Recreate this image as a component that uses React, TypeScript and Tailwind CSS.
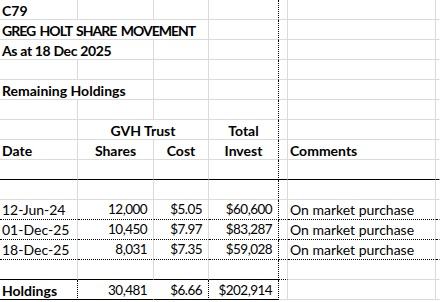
import clsx from "clsx";

type Line = "grid" | "dot" | "black" | "none";

interface CellProps {
  text?: string;
  span?: number;
  align?: "l" | "c" | "r";
  bold?: boolean;
  tight?: boolean;
  lift?: boolean;
  className?: string;
  bottom?: Line;
  right?: Line;
}

function Cell({ text, span = 1, align = "l", bold, tight, lift, className, bottom = "grid", right = "grid" }: CellProps) {
  return (
    <div
      className={clsx(
        "h-[20px] flex items-end whitespace-nowrap leading-[17px] overflow-visible",
        span === 2 && "col-span-2",
        span === 3 && "col-span-3",
        align === "l" && "justify-start pl-[2px]",
        align === "c" && "justify-center",
        align === "r" && "justify-end pr-[6px]",
        bold && "font-bold",
        // Lato digits run wider than the sheet's font
        tight && "text-[13.5px] tracking-[-0.55px]",
        lift && "pb-[1px]",
        bottom === "grid" && "border-b border-b-[#dadada]",
        bottom === "dot" && "border-b border-b-black [border-bottom-style:dotted]",
        bottom === "black" && "border-b border-b-black",
        right === "grid" && "border-r border-r-[#dadada]",
        right === "dot" && "border-r border-r-black [border-right-style:dotted]",
        right === "none" && "border-r border-r-white",
        className
      )}
    >
      {text}
    </div>
  );
}

// blank cells E, F, G at the right of each row
function Tail({ bottom = "grid", eBottom }: { bottom?: Line; eBottom?: Line }) {
  return (
    <>
      <Cell bottom={eBottom ?? bottom} />
      <Cell bottom={bottom} />
      <Cell bottom={bottom} right="none" />
    </>
  );
}

const purchases = [
  { date: "12-Jun-24", shares: "12,000", cost: "$5.05", invest: "$60,600" },
  { date: "01-Dec-25", shares: "10,450", cost: "$7.97", invest: "$83,287" },
  { date: "18-Dec-25", shares: "8,031", cost: "$7.35", invest: "$59,028" },
];

export default function App() {
  return (
    <div className="w-[440px] h-[302px] overflow-hidden bg-white text-black text-[14px] font-[Lato,sans-serif]">
      <div className="grid grid-cols-[78px_76px_55px_70px_9px_148px_1fr] auto-rows-[20px]">
        {/* title block */}
        <Cell text="C79" bold />
        <Cell />
        <Cell />
        <Cell right="dot" />
        <Tail />

        <Cell text="GREG HOLT SHARE MOVEMENT" bold span={3} className="tracking-[-1px] [word-spacing:2px]" />
        <Cell right="dot" />
        <Tail />

        <Cell text="As at 18 Dec 2025" bold span={2} className="tracking-[-0.35px]" />
        <Cell />
        <Cell right="dot" />
        <Tail />

        <Cell />
        <Cell />
        <Cell />
        <Cell right="dot" />
        <Tail />

        <Cell text="Remaining Holdings" bold span={2} />
        <Cell />
        <Cell right="dot" />
        <Tail />

        <Cell />
        <Cell />
        <Cell />
        <Cell right="dot" />
        <Tail />

        {/* headers */}
        <Cell />
        <Cell text="GVH Trust" bold span={2} align="c" />
        <Cell text="Total" bold align="c" right="dot" />
        <Tail />

        <Cell text="Date" bold />
        <Cell text="Shares" bold align="c" />
        <Cell text="Cost" bold align="c" />
        <Cell text="Invest" bold align="c" right="dot" />
        <Cell />
        <Cell text="Comments" bold />
        <Cell right="none" />

        <Cell bottom="black" />
        <Cell bottom="black" />
        <Cell bottom="black" />
        <Cell bottom="black" right="dot" />
        <Tail bottom="black" />

        <Cell />
        <Cell />
        <Cell />
        <Cell right="dot" />
        <Tail />

        {/* purchases */}
        {purchases.map((p) => (
          <div key={p.date} className="contents">
            <Cell text={p.date} lift bottom="dot" />
            <Cell text={p.shares} tight lift align="r" bottom="dot" />
            <Cell text={p.cost} tight lift align="r" bottom="dot" />
            <Cell text={p.invest} tight lift align="r" bottom="dot" right="dot" />
            <Cell bottom="dot" />
            <Cell text="On market purchase" lift bottom="dot" />
            <Cell bottom="dot" right="none" />
          </div>
        ))}

        <Cell bottom="black" />
        <Cell bottom="black" />
        <Cell bottom="black" />
        <Cell bottom="black" right="dot" />
        <Tail eBottom="dot" />

        {/* totals */}
        <Cell text="Holdings" bold bottom="black" right="dot" />
        <Cell text="30,481" tight align="r" bottom="black" right="none" />
        <Cell text="$6.66" tight align="r" bottom="black" right="dot" />
        <Cell text="$202,914" tight align="r" bottom="black" right="dot" />
        <Tail />
      </div>
    </div>
  );
}
